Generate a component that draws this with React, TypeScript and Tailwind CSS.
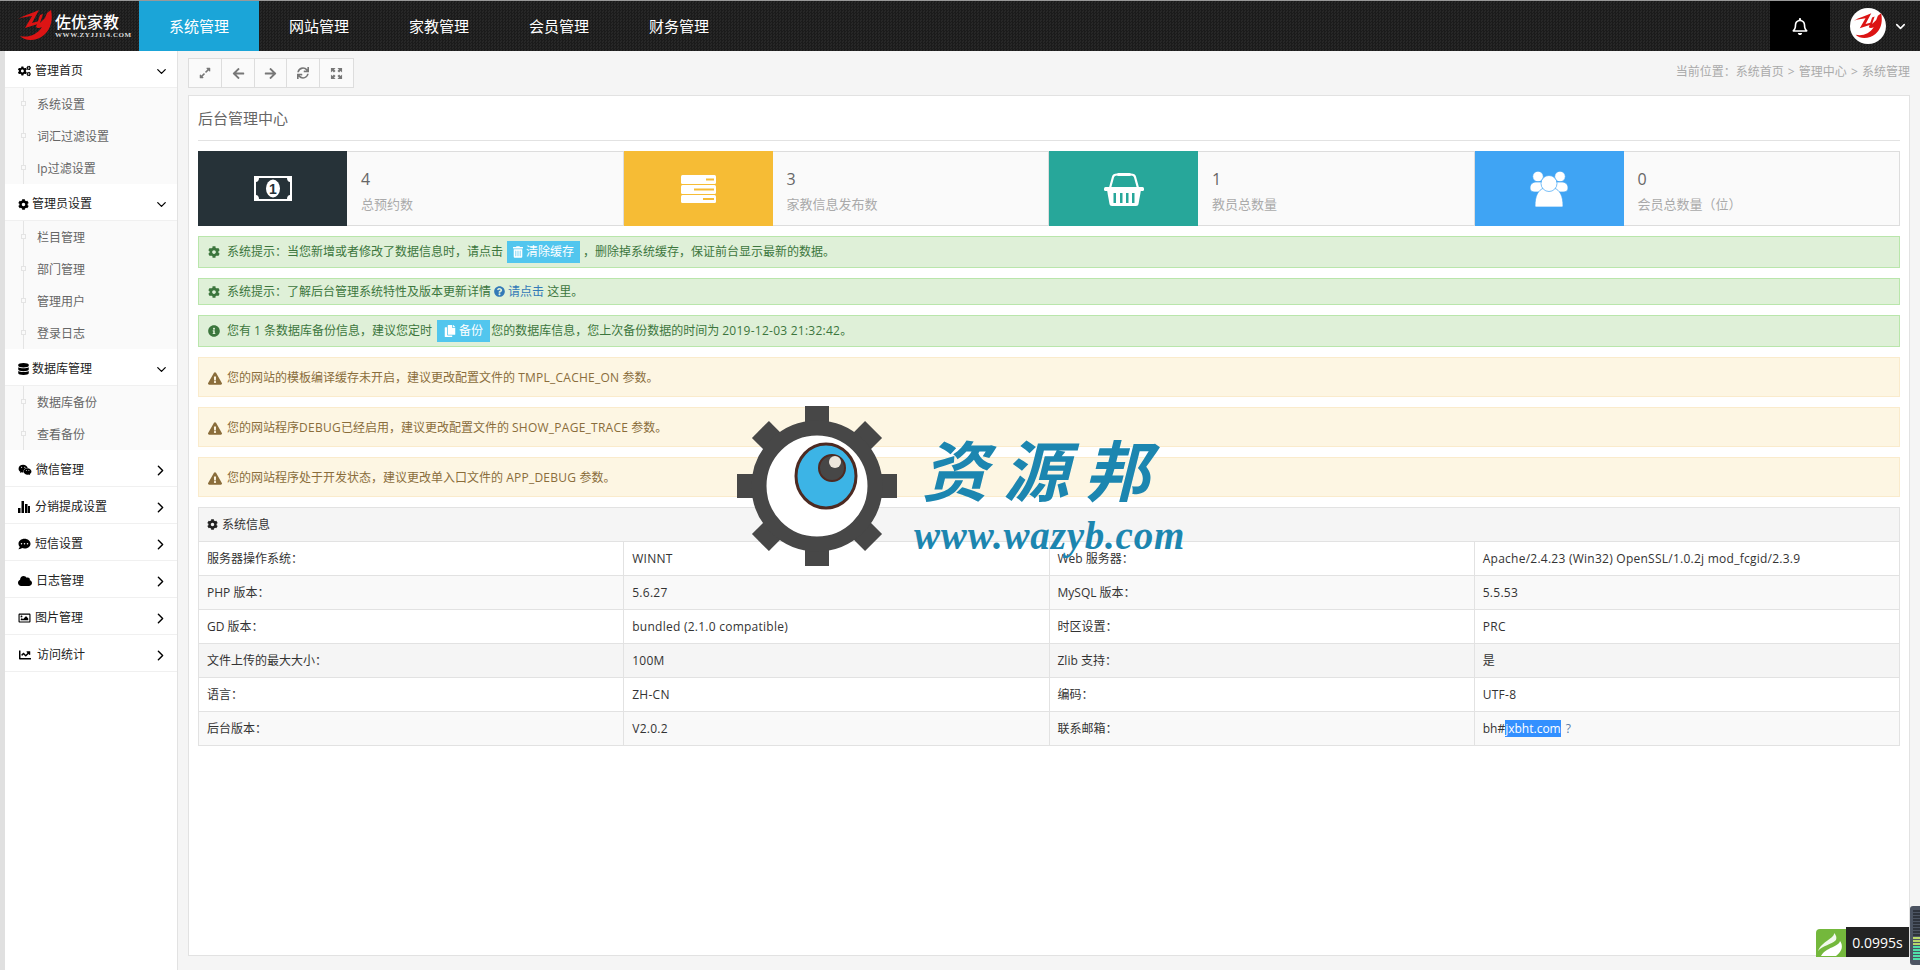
import type { ReactNode } from 'react';
import { ChevronDown, ChevronRight } from 'lucide-react';
import {
  FaArrowLeft,
  FaArrowRight,
  FaChartLine,
  FaCloud,
  FaCog,
  FaCogs,
  FaCommentDots,
  FaCopy,
  FaDatabase,
  FaExclamationTriangle,
  FaExpandAlt,
  FaInfoCircle,
  FaQuestionCircle,
  FaRegBell,
  FaRegImage,
  FaSync,
  FaTrashAlt,
  FaWeixin,
} from 'react-icons/fa';

const navItems = ['系统管理', '网站管理', '家教管理', '会员管理', '财务管理'];

function LogoMark({ className }: { className: string }) {
  return (
    <svg viewBox="0 0 34 32" className={className} fill="#dc1414">
      <path d="M0 9C6 5 13 4 21 0L14 13 21 11 20 14 7 18 14 6C9 7 4 7 0 9Z" />
      <path d="M22 5L25 4 22 13 27 8 29 3 33 0C35 10 33 19 26 25 19 31 8 32 2 26 10 28 19 25 24 17 21 18.500 19 18 18 17Z" />
    </svg>
  );
}

function BarsIcon() {
  return (
    <svg viewBox="0 0 12 12" className="w-[12px] h-[12px]" fill="#000">
      <rect x="0" y="7" width="2.500" height="5" />
      <rect x="3.500" y="0" width="2.500" height="12" />
      <rect x="7" y="3" width="2.500" height="9" />
      <rect x="10" y="5" width="2" height="7" />
    </svg>
  );
}

function CornersIcon() {
  return (
    <svg viewBox="0 0 14 14" className="w-[13px] h-[13px]" fill="#777">
      <path d="M1 1h5L4.400 2.600 6 4.200 4.200 6 2.600 4.400 1 6Z" />
      <path d="M13 1H8l1.600 1.600L8 4.200 9.800 6l1.600-1.600L13 6Z" />
      <path d="M1 13h5l-1.600-1.600L6 9.800 4.200 8l-1.600 1.600L1 8Z" />
      <path d="M13 13H8l1.600-1.600L8 9.800 9.800 8l1.600 1.600L13 8Z" />
    </svg>
  );
}

function MoneyIcon() {
  return (
    <svg viewBox="0 0 38 25" className="w-[38px] h-[25px]">
      <rect width="38" height="25" fill="#fff" />
      <path d="M5 2H33C33 4.500 34.500 6 36 6V19C34.500 19 33 20.500 33 23H5C5 20.500 3.500 19 2 19V6C3.500 6 5 4.500 5 2Z" fill="#263238" />
      <ellipse cx="19" cy="12.500" rx="7" ry="9" fill="#fff" />
      <text x="19" y="17.500" textAnchor="middle" fontSize="14" fontWeight="700" fill="#263238" fontFamily="Liberation Sans">1</text>
    </svg>
  );
}

function ServerIcon() {
  return (
    <svg viewBox="0 0 35 28" className="w-[35px] h-[28px]">
      <rect width="35" height="9" y="0" rx="1.500" fill="#fff" />
      <rect width="35" height="9" y="10" rx="1.500" fill="#fff" />
      <rect width="35" height="8" y="20" rx="1.500" fill="#fff" />
      <rect x="25" y="3.500" width="8" height="2" fill="#f6bc35" />
      <rect x="13" y="13.500" width="20" height="2" fill="#f6bc35" />
      <rect x="22" y="23" width="11" height="2" fill="#f6bc35" />
    </svg>
  );
}

function BasketIcon() {
  return (
    <svg viewBox="0 0 40 34" className="w-[40px] h-[34px]" fill="none">
      <path d="M6 16L9 5C9.500 3 11 2.500 13 2.500H27C29 2.500 30.500 3 31 5L34 16" stroke="#fff" strokeWidth="2.200" />
      <rect x="13" y="1" width="14" height="3" rx="1.500" fill="#fff" />
      <rect x="0" y="15" width="40" height="4" rx="1.500" fill="#fff" />
      <path d="M3 18H37L34.500 32C34.300 33 33.500 34 32 34H8C6.500 34 5.700 33 5.500 32Z" fill="#fff" />
      <rect x="9.500" y="21" width="2.500" height="10" fill="#27a79a" />
      <rect x="16" y="21" width="2.500" height="10" fill="#27a79a" />
      <rect x="22" y="21" width="2.500" height="10" fill="#27a79a" />
      <rect x="28" y="21" width="2.500" height="10" fill="#27a79a" />
    </svg>
  );
}

function UsersIcon() {
  return (
    <svg viewBox="0 0 38 36" className="w-[38px] h-[36px]" fill="#fff" stroke="#3fa4f4" strokeWidth="0.700">
      <circle cx="8" cy="5.500" r="5.300" />
      <circle cx="30" cy="5.500" r="5.300" />
      <path d="M0 17C0 13 3 11 6 11L13 11 13 21 5 21C2 21 0 20 0 17Z" />
      <path d="M38 17C38 13 35 11 32 11L25 11 25 21 33 21C36 21 38 20 38 17Z" />
      <path d="M5 35C5 25 8 19 14 17H24C30 19 33 25 33 35 33 35.500 32.500 36 32 36H6C5.500 36 5 35.500 5 35Z" />
      <circle cx="19" cy="12.500" r="8" />
    </svg>
  );
}

function Watermark() {
  const teeth = [0, 45, 90, 135, 180, 225, 270, 315];
  return (
    <div className="absolute left-[737px] top-[405px] w-[460px] h-[160px] pointer-events-none">
      <svg viewBox="0 0 160 160" className="absolute left-0 top-0 w-[160px] h-[160px]">
        {teeth.map((deg) => (
          <rect key={deg} x="68" y="0" width="24" height="30" fill="#474747" transform={`rotate(${deg} 80 80)`} />
        ))}
        <circle cx="80" cy="80" r="58" fill="#fff" stroke="#474747" strokeWidth="15" />
        <ellipse cx="89" cy="70" rx="30" ry="32" fill="#3cb4e6" stroke="#4d2a22" strokeWidth="3" />
        <circle cx="95" cy="62" r="13" fill="#474747" stroke="#4d2a22" strokeWidth="2" />
        <circle cx="98" cy="56" r="6" fill="#ece6dc" />
      </svg>
      <div className="absolute left-[185px] top-[21px] text-[66px] leading-[80px] tracking-[15px] italic font-semibold text-[#1c86b0] font-['Noto_Sans_CJK_SC',sans-serif] whitespace-nowrap">
        资源邦
      </div>
      <div className="absolute left-[177px] top-[114px] text-[39px] leading-[32px] tracking-[0.800px] italic font-bold text-[#1c86b0] font-['Liberation_Serif',serif] whitespace-nowrap">
        www.wazyb.com
      </div>
    </div>
  );
}

function Header() {
  return (
    <header className="h-[50px] flex bg-[#202020] bg-[repeating-conic-gradient(#1b1b1b_0_25%,#272727_0_50%)] bg-[length:3px_3px] text-white">
      <div className="w-[139px] pl-[18px] flex items-center gap-[3px]">
        <LogoMark className="w-[34px] h-[32px]" />
        <div className="flex flex-col">
          <span className="text-[16px] leading-[18px] font-medium">佐优家教</span>
          <span className="text-[7px] leading-[8px] font-bold tracking-[0.600px] text-[#ddd] font-['Liberation_Serif',serif]">WWW.ZYJJ114.COM</span>
        </div>
      </div>
      <nav className="flex">
        {navItems.map((item, i) => (
          <a key={item} className={`w-[120px] flex items-center justify-center text-[15px] ${i === 0 ? 'bg-[#1ba5d8]' : ''}`}>
            {item}
          </a>
        ))}
      </nav>
      <div className="ml-auto flex">
        <div className="w-[60px] bg-black flex items-center justify-center">
          <FaRegBell className="w-[16px] h-[17px]" />
        </div>
        <div className="w-[90px] flex items-center pl-[20px] gap-[7px]">
          <div className="w-[36px] h-[36px] rounded-full bg-white flex items-center justify-center">
            <LogoMark className="w-[28px] h-[27px]" />
          </div>
          <ChevronDown className="w-[15px] h-[15px]" strokeWidth={2.500} />
        </div>
      </div>
    </header>
  );
}

type MenuGroup = {
  title: string;
  icon: ReactNode;
  box: string;
  items?: string[];
};

const menu: MenuGroup[] = [
  { title: '管理首页', icon: <FaCogs className="w-[13px] h-[12px]" />, box: 'w-[17px]', items: ['系统设置', '词汇过滤设置', 'Ip过滤设置'] },
  { title: '管理员设置', icon: <FaCog className="w-[11px] h-[11px]" />, box: 'w-[14px]', items: ['栏目管理', '部门管理', '管理用户', '登录日志'] },
  { title: '数据库管理', icon: <FaDatabase className="w-[11px] h-[12px]" />, box: 'w-[14px]', items: ['数据库备份', '查看备份'] },
  { title: '微信管理', icon: <FaWeixin className="w-[14px] h-[12px]" />, box: 'w-[18px]' },
  { title: '分销提成设置', icon: <BarsIcon />, box: 'w-[17px]' },
  { title: '短信设置', icon: <FaCommentDots className="w-[13px] h-[12px]" />, box: 'w-[17px]' },
  { title: '日志管理', icon: <FaCloud className="w-[14px] h-[12px]" />, box: 'w-[18px]' },
  { title: '图片管理', icon: <FaRegImage className="w-[13px] h-[12px]" />, box: 'w-[17px]' },
  { title: '访问统计', icon: <FaChartLine className="w-[14px] h-[12px]" />, box: 'w-[19px]' },
];

function Sidebar() {
  return (
    <aside className="w-[173px] bg-white border-r border-[#e2e2e2] text-[12px]">
      {menu.map((group) => (
        <div key={group.title}>
          <div className="h-[37px] flex items-center pl-[13px] pr-[8px] pt-[4px] border-b border-[#f0f0f0] text-[#222]">
            <span className={`${group.box} flex items-center text-black`}>{group.icon}</span>
            <span>{group.title}</span>
            {group.items ? (
              <ChevronDown className="ml-auto w-[15px] h-[15px] text-black" strokeWidth={2} />
            ) : (
              <ChevronRight className="ml-auto w-[17px] h-[17px] text-black" strokeWidth={2} />
            )}
          </div>
          {group.items && (
            <div className="bg-[#fafafa]">
              <ul className="ml-[18px] border-l border-[#e4e4e4]">
                {group.items.map((item) => (
                  <li key={item} className="relative h-[32px] flex items-center pl-[13px] pt-[1px] text-[#666]">
                    <span className="absolute left-[-3px] top-[13px] w-[5px] h-[5px] bg-[#fafafa] border border-[#e4e4e4]" />
                    {item}
                  </li>
                ))}
              </ul>
            </div>
          )}
        </div>
      ))}
    </aside>
  );
}

function StatCard({ icon, bg, value, label }: { icon: ReactNode; bg: string; value: string; label: string }) {
  return (
    <div className="h-[75px] flex bg-[#fafafa] border-y border-r border-[#dddddd]">
      <div className={`w-[149px] -my-px flex items-center justify-center ${bg}`}>{icon}</div>
      <div className="pl-[14px] pt-[16px]">
        <div className="text-[16px] leading-[22px] text-[#666]">{value}</div>
        <div className="mt-[4px] text-[13px] leading-[20px] text-[#aaa]">{label}</div>
      </div>
    </div>
  );
}

function Alert({ tone, className, children }: { tone: 'success' | 'warning'; className: string; children: ReactNode }) {
  const toneClass =
    tone === 'success'
      ? 'bg-[#dff0d8] border-[#b9e6ab] text-[#3c763d]'
      : 'bg-[#fdf6e3] border-[#faebcc] text-[#8a6d3b] pt-[2px]';
  return <div className={`flex items-center pl-[9px] border text-[12px] whitespace-pre ${toneClass} ${className}`}>{children}</div>;
}

function Latin({ children }: { children: ReactNode }) {
  return <span className="tracking-[0.250px]">{children}</span>;
}

function InfoTable() {
  const rows = [
    ['服务器操作系统：', 'WINNT', 'Web 服务器：', 'Apache/2.4.23 (Win32) OpenSSL/1.0.2j mod_fcgid/2.3.9'],
    ['PHP 版本：', '5.6.27', 'MySQL 版本：', '5.5.53'],
    ['GD 版本：', 'bundled (2.1.0 compatible)', '时区设置：', 'PRC'],
    ['文件上传的最大大小：', '100M', 'Zlib 支持：', '是'],
    ['语言：', 'ZH-CN', '编码：', 'UTF-8'],
  ];
  const rowBg = ['bg-white', 'bg-[#f9f9f9]', 'bg-white', 'bg-[#f5f5f5]', 'bg-white'];
  const td = 'h-[34px] px-[8px] border border-[#e2e2e2]';
  return (
    <table className="w-full table-fixed border-collapse mt-[10px] text-[12px] text-[#333]">
      <tbody>
        <tr className="bg-[#f5f5f5]">
          <td colSpan={4} className={td}>
            <span className="flex items-center gap-[4px]">
              <FaCog className="w-[11px] h-[11px] text-[#222]" />
              系统信息
            </span>
          </td>
        </tr>
        {rows.map((row, i) => (
          <tr key={row[0]} className={rowBg[i]}>
            {row.map((cell, c) => (
              <td key={cell} className={td}>
                {c % 2 === 1 ? <Latin>{cell}</Latin> : cell}
              </td>
            ))}
          </tr>
        ))}
        <tr className="bg-[#f9f9f9]">
          <td className={td}>后台版本：</td>
          <td className={td}>
            <Latin>V2.0.2</Latin>
          </td>
          <td className={td}>联系邮箱：</td>
          <td className={td}>
            bh#<span className="bg-[#3390ff] text-white">jxbht.com</span> <span className="ml-[2px] text-[#5c7ea8]">?</span>
          </td>
        </tr>
      </tbody>
    </table>
  );
}

export default function App() {
  return (
    <div className="relative h-[970px] overflow-hidden flex flex-col bg-[#f5f5f5] border-t border-[#999] font-['Open_Sans','Noto_Sans_CJK_SC',sans-serif]">
      <Header />
      <div className="flex-1 flex min-h-0">
        <div className="w-[5px] bg-[#e0e0e0]" />
        <Sidebar />
        <main className="flex-1 flex flex-col px-[10px] pt-[7px] pb-[14px] min-w-0">
          <div className="flex justify-between items-start">
            <div className="flex h-[30px] bg-[#fafafa] border border-[#dddddd] divide-x divide-[#dddddd]">
              <span className="w-[33px] flex items-center justify-center"><FaExpandAlt className="w-[12px] h-[12px] text-[#777]" /></span>
              <span className="w-[33px] flex items-center justify-center"><FaArrowLeft className="w-[13px] h-[13px] text-[#777]" /></span>
              <span className="w-[32px] flex items-center justify-center"><FaArrowRight className="w-[13px] h-[13px] text-[#777]" /></span>
              <span className="w-[33px] flex items-center justify-center"><FaSync className="w-[12px] h-[12px] text-[#777]" /></span>
              <span className="w-[33px] flex items-center justify-center"><CornersIcon /></span>
            </div>
            <div className="text-[12px] leading-[28px] text-[#aaa] whitespace-pre">
              当前位置：系统首页<span className="mx-[1px]"> {'>'} </span>管理中心<span className="mx-[1px]"> {'>'} </span>系统管理
            </div>
          </div>
          <section className="flex-1 mt-[7px] bg-white border border-[#e2e2e2] px-[9px]">
            <h2 className="h-[45px] flex items-center text-[15px] font-normal text-[#666] border-b border-[#e2e2e2]">后台管理中心</h2>
            <div className="mt-[10px] grid grid-cols-4">
              <StatCard icon={<MoneyIcon />} bg="bg-[#263238]" value="4" label="总预约数" />
              <StatCard icon={<ServerIcon />} bg="bg-[#f6bc35]" value="3" label="家教信息发布数" />
              <StatCard icon={<BasketIcon />} bg="bg-[#27a79a]" value="1" label="教员总数量" />
              <StatCard icon={<UsersIcon />} bg="bg-[#3fa4f4]" value="0" label="会员总数量（位）" />
            </div>
            <div className="mt-[10px] flex flex-col gap-[10px]">
              <Alert tone="success" className="h-[32px]">
                <FaCog className="w-[12px] h-[12px] mr-[7px]" />
                系统提示：当您新增或者修改了数据信息时，请点击
                <span className="ml-[4px] mr-[3px] h-[22px] px-[6px] bg-[#52c6ee] text-white flex items-center gap-[3px]">
                  <FaTrashAlt className="w-[10px] h-[12px]" />
                  清除缓存
                </span>
                {' '}，删除掉系统缓存，保证前台显示最新的数据。
              </Alert>
              <Alert tone="success" className="h-[27px]">
                <FaCog className="w-[12px] h-[12px] mr-[7px]" />
                系统提示：了解后台管理系统特性及版本更新详情
                <FaQuestionCircle className="w-[11px] h-[11px] mx-[3px] text-[#337ab7]" />
                <span className="text-[#337ab7]">请点击</span> 这里。
              </Alert>
              <Alert tone="success" className="h-[32px]">
                <FaInfoCircle className="w-[12px] h-[12px] mr-[7px]" />
                您有 1 条数据库备份信息，建议您定时
                <span className="ml-[5px] mr-[1px] h-[22px] px-[7px] bg-[#52c6ee] text-white flex items-center gap-[3px]">
                  <FaCopy className="w-[12px] h-[12px]" />
                  备份
                </span>
                {' '}您的数据库信息，您上次备份数据的时间为 <Latin>2019-12-03 21:32:42</Latin>。
              </Alert>
              <Alert tone="warning" className="h-[40px]">
                <FaExclamationTriangle className="w-[14px] h-[13px] mr-[5px]" />
                您的网站的模板编译缓存未开启，建议更改配置文件的 <Latin>TMPL_CACHE_ON</Latin> 参数。
              </Alert>
              <Alert tone="warning" className="h-[40px]">
                <FaExclamationTriangle className="w-[14px] h-[13px] mr-[5px]" />
                您的网站程序<Latin>DEBUG</Latin>已经启用，建议更改配置文件的 <Latin>SHOW_PAGE_TRACE</Latin> 参数。
              </Alert>
              <Alert tone="warning" className="h-[40px]">
                <FaExclamationTriangle className="w-[14px] h-[13px] mr-[5px]" />
                您的网站程序处于开发状态，建议更改单入口文件的 <Latin>APP_DEBUG</Latin> 参数。
              </Alert>
            </div>
            <InfoTable />
          </section>
        </main>
      </div>

      <Watermark />

      {/* page trace badge and the audio widget on the window edge */}
      <div className="absolute left-[1816px] top-[926px] h-[30px] flex items-end">
        <div className="w-[30px] h-[28px] bg-[#74b83c] rounded-tl-[4px] overflow-hidden">
          <svg viewBox="0 0 30 28" className="w-[30px] h-[28px]" fill="#fff">
            <path d="M18 4C19 9 6 12 2 22 7 16 15 16 20 11 21 8 20 6 18 4Z" opacity="0.900" />
            <path d="M24 12C23 18 10 18 5 27H20C27 22 27 16 24 12Z" />
          </svg>
        </div>
        <div className="w-[63px] h-[30px] bg-[#232323] text-white text-[14px] flex items-center justify-center">0.0995s</div>
      </div>
      <div className="absolute left-[1910px] top-[905px] w-[10px] h-[59px] bg-[#4c5462] rounded-l-[3px] flex flex-col gap-px pl-[3px] pt-[4px]">
        {Array.from({ length: 17 }).map((_, i) => (
          <span key={i} className={`h-[2px] w-[7px] ${i < 9 ? 'bg-[#2e333c]' : i < 12 ? 'bg-[#b8d86a]' : 'bg-[#4fe0a8]'}`} />
        ))}
      </div>
    </div>
  );
}
